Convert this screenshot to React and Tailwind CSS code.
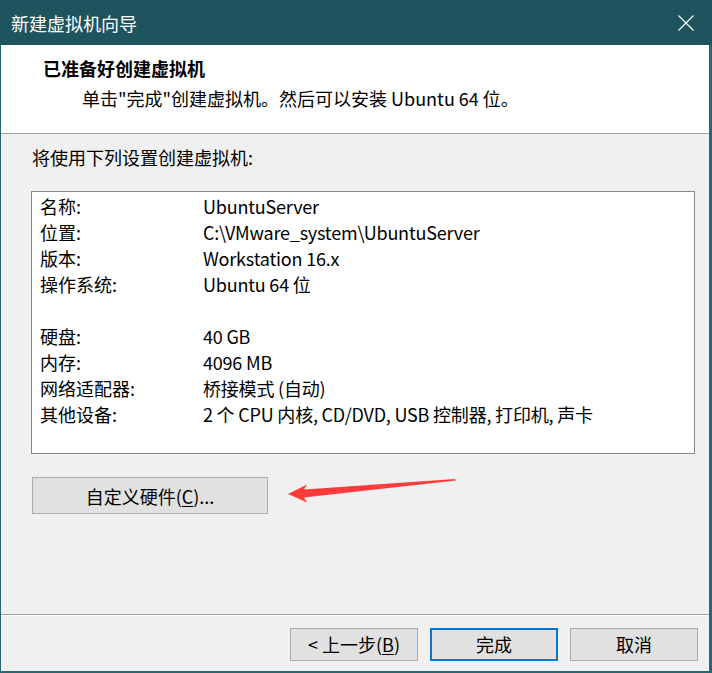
import React from "react";

const rows = [
  ["名称:", "UbuntuServer"],
  ["位置:", "C:\\VMware_system\\UbuntuServer"],
  ["版本:", "Workstation 16.x"],
  ["操作系统:", "Ubuntu 64 位"],
  null,
  ["硬盘:", "40 GB"],
  ["内存:", "4096 MB"],
  ["网络适配器:", "桥接模式 (自动)"],
  ["其他设备:", "2 个 CPU 内核, CD/DVD, USB 控制器, 打印机, 声卡"],
];

export default function App() {
  return (
    <div className="relative w-[712px] h-[673px] flex flex-col bg-[#f0f0f0] text-[18px] leading-[26px] text-black font-['Noto_Sans_CJK_SC',sans-serif]">
      {/* title bar */}
      <div className="h-[45px] shrink-0 bg-[#1e545e] flex items-center justify-between pl-[11px] pr-[18px] text-white">
        <span>新建虚拟机向导</span>
        <svg width="16" height="16" viewBox="0 0 16 16" className="mt-[1px]">
          <path d="M0.5 0.5 L15.5 15.5 M15.5 0.5 L0.5 15.5" stroke="#fff" strokeWidth="1.2" />
        </svg>
      </div>

      <div className="flex-1 flex flex-col border-l border-r-[3px] border-b-2 border-[#2b6570]">
        {/* header */}
        <div className="h-[89px] shrink-0 bg-white border-b border-[#a0a0a0] pt-[10px]">
          <div className="pl-[42px] font-bold">已准备好创建虚拟机</div>
          <div className="pl-[81px] mt-[4px]">单击"完成"创建虚拟机。然后可以安装 Ubuntu 64 位。</div>
        </div>

        {/* body */}
        <div className="flex-1 pt-[10px] pl-[30px]">
          <div className="pl-[1px]">将使用下列设置创建虚拟机:</div>
          <div className="mt-[21px] w-[664px] h-[263px] bg-white border border-[#828790] pt-[1px] pl-[8px]">
            {rows.map((r, i) =>
              r ? (
                <div key={i} className="flex h-[26px]">
                  <span className="w-[163px] shrink-0">{r[0]}</span>
                  <span className="whitespace-nowrap tracking-[-0.2px]">{r[1]}</span>
                </div>
              ) : (
                <div key={i} className="h-[26px]" />
              )
            )}
          </div>
          <button className="mt-[23px] ml-[1px] w-[236px] h-[37px] bg-[#e1e1e1] border border-[#adadad] flex items-center justify-center">
            <span>
              自定义硬件(<span className="underline underline-offset-2">C</span>)...
            </span>
          </button>
        </div>

        {/* footer */}
        <div className="h-[57px] shrink-0 border-t border-[#a0a0a0]">
          <div className="h-full border-t border-white flex justify-end items-start pt-[12px] pr-[11px] gap-[12px]">
            <button className="w-[128px] h-[33px] pb-[2px] bg-[#e1e1e1] border border-[#adadad] flex items-center justify-center">
              <span>
                &lt; 上一步(<span className="underline underline-offset-2">B</span>)
              </span>
            </button>
            <button className="w-[128px] h-[33px] pb-[2px] bg-[#e1e1e1] border-2 border-[#0078d7] flex items-center justify-center">
              完成
            </button>
            <button className="w-[128px] h-[33px] pb-[2px] bg-[#e1e1e1] border border-[#adadad] flex items-center justify-center">
              取消
            </button>
          </div>
        </div>
      </div>

      {/* red annotation arrow */}
      <svg
        className="absolute left-[285px] top-[476px] pointer-events-none"
        width="175"
        height="30"
        viewBox="0 0 175 30"
      >
        <path d="M3 18 L22 8.5 L19 13.5 L170 3 L171 4.5 L19 21.5 L22 26.5 Z" fill="#ff3b3b" />
      </svg>
    </div>
  );
}
